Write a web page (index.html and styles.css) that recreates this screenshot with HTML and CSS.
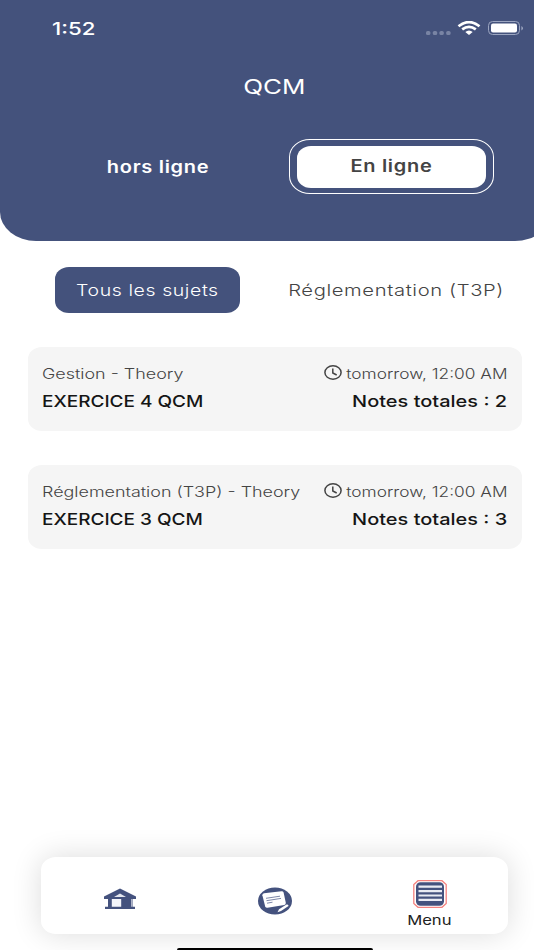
FILE: index.html
```html
<!DOCTYPE html>
<html lang="fr">
<head>
    <meta charset="UTF-8">
    <meta name="viewport" content="width=device-width, initial-scale=1.0">
    <link rel="stylesheet" href="styles.css">
    <title>QCM</title>
</head>
<body>
    <header class="header">
        <div class="status-bar">
            <span class="time">1:52</span>
            <div class="status-icons">
                <svg class="dots" width="25" height="4" viewBox="0 0 25 4">
                    <rect x="0" y="0" width="4.4" height="4" rx="1.6"/>
                    <rect x="6.8" y="0" width="4.4" height="4" rx="1.6"/>
                    <rect x="13.4" y="0" width="4.4" height="4" rx="1.6"/>
                    <rect x="20.2" y="0" width="4.4" height="4" rx="1.6"/>
                </svg>
                <svg class="wifi" width="24" height="14" viewBox="0 0 24 14">
                    <path d="M1.5 5.3Q12-3.1 22.5 5.3M5.2 8.4Q12 3.2 18.8 8.4" fill="none" stroke="#fff" stroke-width="2.7"/>
                    <path d="M8.3 11Q12 8 15.7 11L12 14Z" fill="#fff"/>
                </svg>
                <svg class="battery" width="36" height="14" viewBox="0 0 36 14">
                    <rect x="0.5" y="0.5" width="31" height="13" rx="4" fill="none" stroke="#9ba5c0"/>
                    <rect x="3" y="2.5" width="26" height="9" rx="2" fill="#fff"/>
                    <path d="M33.4 5v4.4Q35 8.6 35 7.2T33.4 5Z" fill="#9ba5c0"/>
                </svg>
            </div>
        </div>
        <h1 class="title"><span class="title-text">QCM</span></h1>
        <div class="switch">
            <div class="switch-item"><span class="switch-text">hors ligne</span></div>
            <div class="switch-item switch-ring">
                <div class="switch-active"><span class="switch-text">En ligne</span></div>
            </div>
        </div>
    </header>

    <div class="tabs">
        <div class="tab tab-active"><span class="tab-all">Tous les sujets</span></div>
        <div class="tab"><span class="tab-reg">Réglementation (T3P)</span></div>
    </div>

    <main class="list">
        <div class="card">
            <div class="row">
                <span class="subject">Gestion - Theory</span>
                <div class="date">
                    <svg class="clock" width="18" height="15" viewBox="0 0 18 15">
                        <ellipse cx="9" cy="7.5" rx="8.1" ry="6.7"/>
                        <path d="M8.8 3.5V8L12.7 10"/>
                    </svg>
                    <span class="date-text">tomorrow, 12:00 AM</span>
                </div>
            </div>
            <div class="row">
                <span class="name">EXERCICE 4 QCM</span>
                <span class="total">Notes totales : 2</span>
            </div>
        </div>
        <div class="card">
            <div class="row">
                <span class="subject">Réglementation (T3P) - Theory</span>
                <div class="date">
                    <svg class="clock" width="18" height="15" viewBox="0 0 18 15">
                        <ellipse cx="9" cy="7.5" rx="8.1" ry="6.7"/>
                        <path d="M8.8 3.5V8L12.7 10"/>
                    </svg>
                    <span class="date-text">tomorrow, 12:00 AM</span>
                </div>
            </div>
            <div class="row">
                <span class="name">EXERCICE 3 QCM</span>
                <span class="total">Notes totales : 3</span>
            </div>
        </div>
    </main>

    <nav class="menu-bar">
        <div class="menu-item menu-item-home">
            <svg width="34" height="22" viewBox="0 0 34 22">
                <path d="M17 0.5L33 8.5V11H29.5V18.8H32V21H2V18.8H5V11H1V8.5Z" fill="#44527e"/>
                <path d="M17 5.5L23 9H11Z" fill="#e4e7ef"/>
                <path d="M8.8 11H18.2V18.8H8.8ZM28 11H28.6V18.8H28Z" fill="#f4f5fa"/>
            </svg>
        </div>
        <div class="menu-item menu-item-note">
            <svg width="36" height="28" viewBox="0 0 36 28">
                <ellipse cx="18" cy="14" rx="17" ry="13.6" fill="#44527e"/>
                <path d="M7 6.2L24.5 4.2Q26.2 4.1 26.6 5.6L28.8 15.8Q29 17.5 27.3 18L10.5 20.8Q8.8 21 8.2 19.4L5.4 8.3Q5.2 6.6 7 6.2Z" fill="#fff"/>
                <path d="M9 11.3L23 9.2M9.5 13.7L24 11.4M10 16.2L15.5 15.2" stroke="#7d87a8" stroke-width="1" fill="none"/>
                <path d="M20.5 25.2L22 22.2L29.5 17.5Q31.5 17 31.5 19L24 24Z" fill="#fff"/>
            </svg>
        </div>
        <div class="menu-item menu-item-active">
            <svg width="34" height="28" viewBox="0 0 34 28">
                <path d="M5 0.7H29L33.2 4.5V23.5L29 27.3H5L0.8 23.5V4.5Z" fill="#fff" stroke="#f4827f" stroke-width="1.3"/>
                <rect x="3" y="2.3" width="28" height="23.4" rx="4.5" fill="#44527e"/>
                <path d="M5.5 6.7H29M5.5 11.2H29M5.5 15.5H29M5.5 19.8H29" stroke="#e9ebf3" stroke-width="2.2"/>
            </svg>
            <span class="menu-label">Menu</span>
        </div>
    </nav>
    <div class="home-indicator"></div>
</body>
</html>
```
FILE: styles.css
```css
* {
    box-sizing: border-box;
}

body {
    font-family: Inter, "Liberation Sans", sans-serif;
    background-color: #fff;
    color: #444;
    margin: 0;
    height: 950px;
    overflow: hidden;
    display: flex;
    flex-direction: column;
}

span {
    display: inline-block;
    white-space: nowrap;
    flex: none;
}

.header {
    flex: none;
    height: 241px;
    margin-right: -17px;
    padding-right: 17px;
    background-color: #44527c;
    color: #fff;
    border-radius: 0 0 36px 36px / 0 0 29px 29px;
}

.status-bar {
    display: flex;
    justify-content: space-between;
    align-items: center;
    height: 57px;
    padding: 0 10px 0 52px;
}

.time {
    font-size: 17.5px;
    font-weight: 550;
    transform: scaleX(1.27);
    transform-origin: left;
}

.status-icons {
    display: flex;
    align-items: center;
    margin-top: -1px;
}

.dots {
    fill: #7984a4;
    margin: 9px 7px 0 0;
}

.wifi {
    margin: -1px 7px 0 -1px;
}

.title {
    margin: 0;
    height: 60px;
    padding-left: 15px;
    line-height: 60px;
    font-size: 19.5px;
    font-weight: 370;
    text-align: center;
}

.title-text {
    transform: scaleX(1.33);
}

.switch {
    display: flex;
    padding: 22px 40px 0 55px;
    gap: 28px;
}

.switch-item {
    width: 206px;
    height: 55px;
    display: flex;
    align-items: center;
    justify-content: center;
    font-size: 16.8px;
    font-weight: 600;
    letter-spacing: 0.6px;
}

.switch-ring {
    border: 1.5px solid #fff;
    border-radius: 21px / 18px;
}

.switch-active {
    width: 189px;
    height: 42px;
    padding-bottom: 1px;
    border-radius: 14px / 12px;
    background-color: #fff;
    color: #444;
    display: flex;
    align-items: center;
    justify-content: center;
}

.switch-text {
    transform: scaleX(1.19);
}

.tabs {
    flex: none;
    display: flex;
    height: 46px;
    margin: 26px 0 0 55px;
    gap: 28px;
}

.tab {
    width: 257px;
    padding-bottom: 1px;
    display: flex;
    flex: none;
    align-items: center;
    justify-content: center;
    font-size: 16.5px;
    font-weight: 350;
    letter-spacing: 0.5px;
}

.tab-active {
    width: 185px;
    border-radius: 14px / 12px;
    background-color: #44527c;
    color: #fff;
}

.tab-all {
    transform: scaleX(1.18);
}

.tab-reg {
    transform: scaleX(1.225);
}

.list {
    flex: 1;
    display: flex;
    flex-direction: column;
    gap: 34.4px;
    padding: 34px 12px 0 27.5px;
}

.card {
    height: 84px;
    padding: 12px 15px 12px 14.5px;
    border-radius: 14px / 12px;
    background-color: #f5f5f5;
}

.row {
    display: flex;
    justify-content: space-between;
    align-items: center;
    height: 28px;
}

.subject {
    font-size: 14px;
    font-weight: 350;
    transform: scaleX(1.28);
    transform-origin: left;
}

.date {
    width: 183px;
    display: flex;
    align-items: center;
    justify-content: space-between;
}

.clock {
    fill: none;
    stroke: #444;
    stroke-width: 1.5;
    margin-top: -2px;
}

.date-text {
    font-size: 14px;
    font-weight: 350;
    transform: scaleX(1.235);
    transform-origin: right;
}

.name,
.total {
    color: #151515;
    font-size: 16.5px;
    font-weight: 550;
}

.name {
    transform: scaleX(1.15);
    transform-origin: left;
}

.total {
    transform: scaleX(1.21);
    transform-origin: right;
}

.menu-bar {
    flex: none;
    display: flex;
    height: 77px;
    margin: 0 26px 14px 41px;
    border-radius: 15px / 13px;
    background-color: #fff;
    box-shadow: 0 0 30px rgba(0, 0, 0, 0.14);
}

.menu-item {
    flex: 1;
    display: flex;
    flex-direction: column;
    align-items: center;
}

.menu-item-home {
    padding: 31px 0 0 1px;
}

.menu-item-note {
    padding: 30px 0 0;
}

.menu-item-active {
    padding: 22.5px 1px 0 0;
}

.menu-label {
    margin-top: 4px;
    color: #222;
    font-size: 13px;
    line-height: 16px;
    transform: scaleX(1.28);
}

.home-indicator {
    flex: none;
    width: 196px;
    height: 2px;
    margin-left: 177px;
    border-radius: 4px 4px 0 0;
    background-color: #000;
}
```
